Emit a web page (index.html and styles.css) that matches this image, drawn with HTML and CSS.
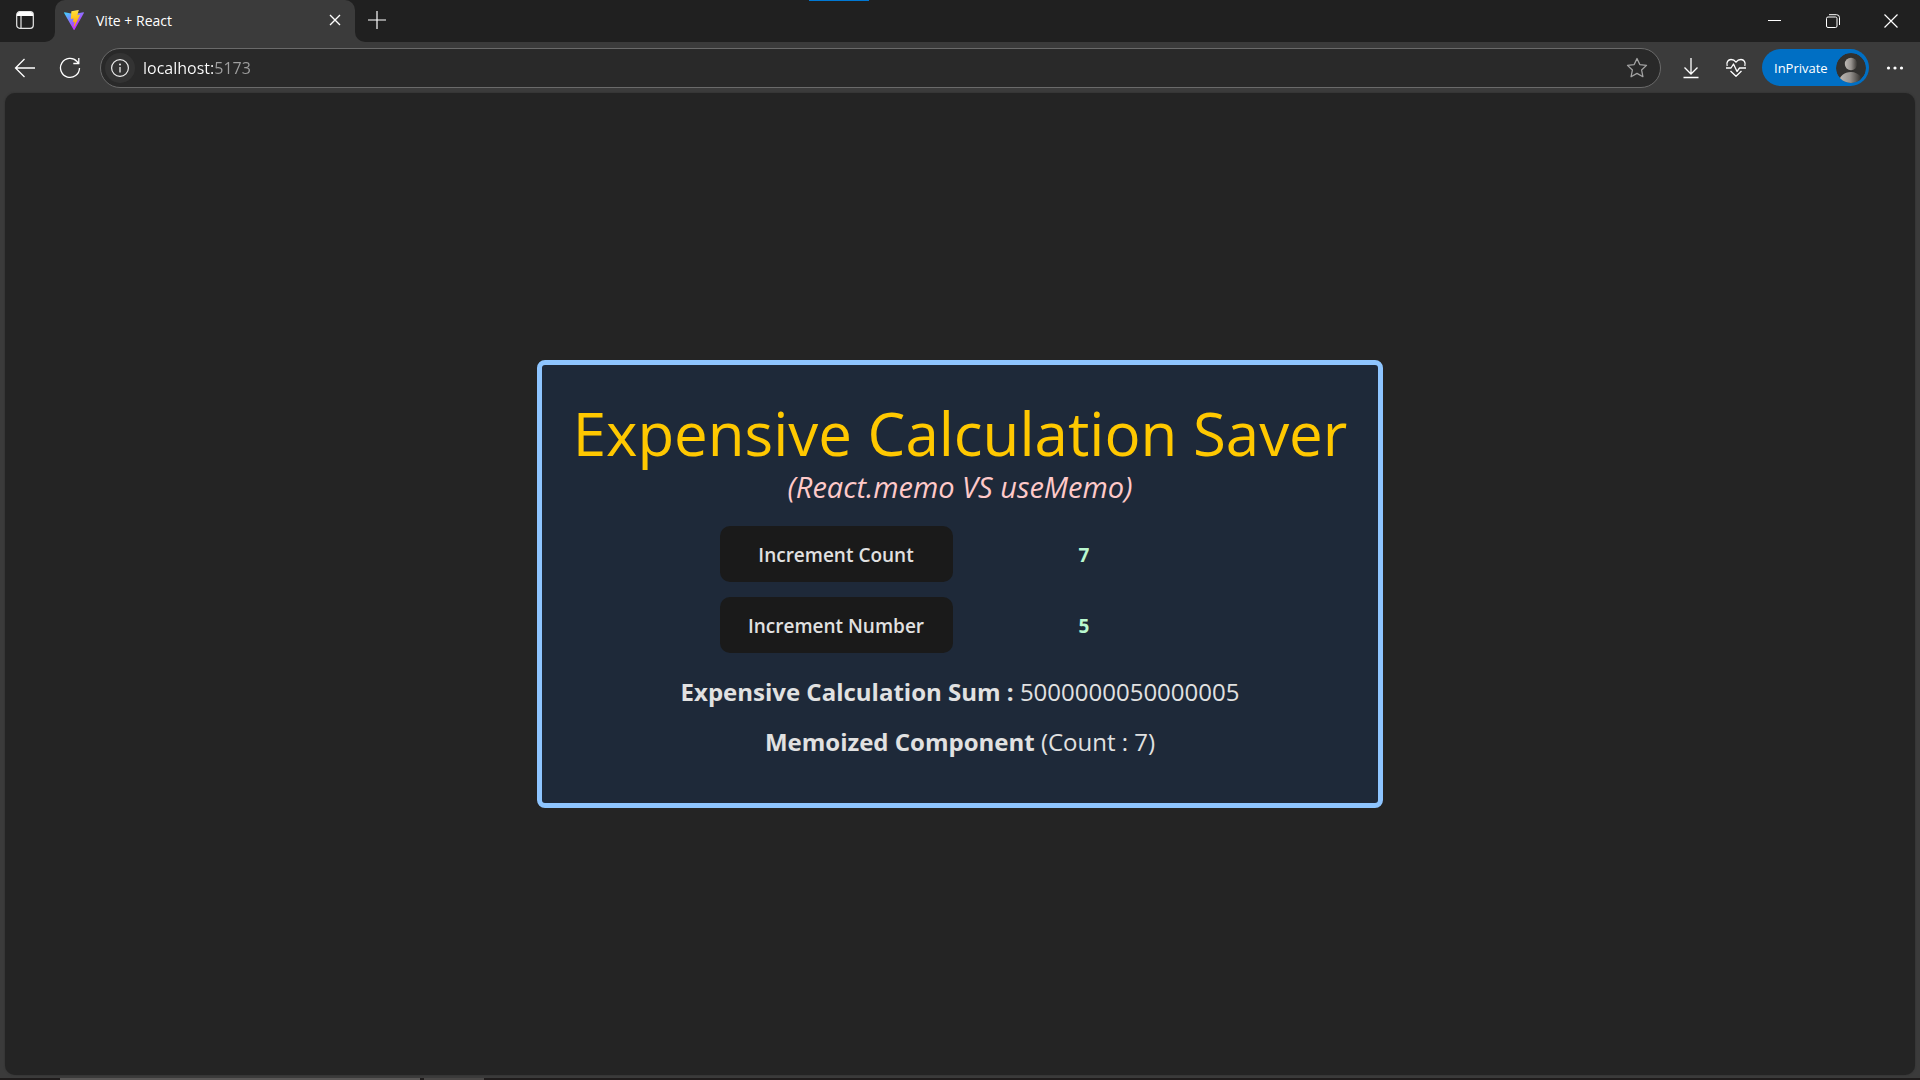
FILE: index.html
```html
<!DOCTYPE html>
<html lang="en">
<head>
<meta charset="utf-8">
<meta name="viewport" content="width=device-width, initial-scale=1">
<title>Vite + React</title>
<link rel="stylesheet" href="styles.css">
</head>
<body>
<div class="browser">
  <header class="tab-strip">
    <div class="strip-start">
      <button class="icon-button" aria-label="Tab actions">
        <svg width="20" height="20" viewBox="0 0 20 20"><rect x="1.7" y="1.7" width="16.6" height="16.6" rx="3" fill="none" stroke="#e6e6e6" stroke-width="1.2"/><path d="M2 6V4.5A2.5 2.5 0 0 1 4.500 2h11A2.500 2.500 0 0 1 18 4.500V6z" fill="#fff"/><path d="M6 6v12" stroke="#e6e6e6" stroke-width="1.2"/></svg>
      </button>
    </div>
    <div class="tab-slot">
      <div class="tab">
        <svg class="favicon" width="20" height="20" viewBox="0 0 256 257" aria-hidden="true">
          <defs>
            <linearGradient id="shield" x1="-.8%" x2="57.6%" y1="7.700%" y2="78.400%"><stop offset="0" stop-color="#41D1FF"/><stop offset="1" stop-color="#BD34FE"/></linearGradient>
            <linearGradient id="bolt" x1="43.400%" x2="50.300%" y1="2.200%" y2="89%"><stop offset="0" stop-color="#FFEA83"/><stop offset=".083" stop-color="#FFDD35"/><stop offset="1" stop-color="#FFA800"/></linearGradient>
          </defs>
          <path fill="url(#shield)" d="M255.153 37.938L134.897 252.976c-2.483 4.440-8.862 4.466-11.382.048L.875 37.958c-2.746-4.814 1.371-10.646 6.827-9.670l120.385 21.517a6.537 6.537 0 0 0 2.322-.004l117.867-21.483c5.438-.991 9.574 4.796 6.877 9.620z"/>
          <path fill="url(#bolt)" d="M185.432.063L96.440 17.501a3.268 3.268 0 0 0-2.634 3.014l-5.474 92.456a3.268 3.268 0 0 0 3.997 3.378l24.777-5.718c2.318-.535 4.413 1.507 3.936 3.838l-7.361 36.047c-.495 2.426 1.782 4.500 4.151 3.780l15.304-4.649c2.372-.720 4.652 1.360 4.150 3.788l-11.698 56.621c-.732 3.542 3.979 5.473 5.943 2.437l1.313-2.028 72.516-144.720c1.215-2.423-.880-5.186-3.540-4.672l-25.505 4.922c-2.396.462-4.435-1.770-3.759-4.114l16.646-57.705c.677-2.350-1.370-4.583-3.769-4.113z"/>
        </svg>
        <span class="tab-title">Vite + React</span>
        <button class="tab-close" aria-label="Close tab">
          <svg width="12" height="12" viewBox="0 0 12 12"><path d="M1 1l10 10M11 1L1 11" stroke="#fff" stroke-width="1.400"/></svg>
        </button>
      </div>
    </div>
    <div class="strip-end">
      <button class="new-tab" aria-label="New tab">
        <svg width="18" height="18" viewBox="0 0 18 18"><path d="M9 0v18M0 9h18" stroke="#fff" stroke-width="1.200"/></svg>
      </button>
      <div class="window-controls">
        <button class="window-button" aria-label="Minimize"><svg width="14" height="14" viewBox="0 0 14 14"><path d="M0 6.500h13" stroke="#fff"/></svg></button>
        <button class="window-button" aria-label="Restore"><svg width="14" height="14" viewBox="0 0 14 14"><rect x=".5" y="3" width="10.500" height="10.500" rx="1.500" fill="none" stroke="#fff"/><path d="M3 .700h7.500a3 3 0 0 1 3 3V11" fill="none" stroke="#fff"/></svg></button>
        <button class="window-button" aria-label="Close"><svg width="14" height="14" viewBox="0 0 14 14"><path d="M.5 .500l13 13M13.500 .500l-13 13" stroke="#fff" stroke-width="1.200"/></svg></button>
      </div>
      <span class="share-marker"></span>
    </div>
  </header>

  <div class="toolbar">
    <button class="icon-button" aria-label="Back">
      <svg width="22" height="22" viewBox="0 0 22 22"><path d="M21 11H1.500M10.500 2L1.500 11l9 9" fill="none" stroke="#fff" stroke-width="1.300"/></svg>
    </button>
    <button class="icon-button" aria-label="Refresh">
      <svg width="22" height="22" viewBox="0 0 22 22"><path d="M20.500 11A9.500 9.500 0 1 1 18 4.500l1.500 1.800M19.800 1v5.500h-5.500" fill="none" stroke="#fff" stroke-width="1.300"/></svg>
    </button>
    <div class="address-bar">
      <button class="site-info" aria-label="View site information">
        <svg width="20" height="20" viewBox="0 0 20 20"><circle cx="10" cy="10" r="8.400" fill="none" stroke="#eee" stroke-width="1.200"/><path d="M10 9v5.500" stroke="#eee" stroke-width="1.300"/><circle cx="10" cy="6.500" r="1" fill="#eee"/></svg>
      </button>
      <input class="address" type="text" aria-label="Address" value="localhost:5173">
      <button class="favorite" aria-label="Add to favorites">
        <svg width="22" height="22" viewBox="0 0 22 22"><path d="M11 1.500l2.800 6.100 6.700.8-4.900 4.600 1.300 6.700L11 16.400l-5.900 3.300 1.300-6.700L1.500 8.400l6.700-.8z" fill="none" stroke="#a3a3a3" stroke-width="1.300" stroke-linejoin="round"/></svg>
      </button>
    </div>
    <button class="icon-button" aria-label="Downloads">
      <svg width="20" height="22" viewBox="0 0 20 22"><path d="M10 1v15.500M3.500 10.500l6.500 6.500 6.500-6.500M2.500 20.500h15" fill="none" stroke="#fff" stroke-width="1.300"/></svg>
    </button>
    <button class="icon-button" aria-label="Browser essentials">
      <svg width="22" height="22" viewBox="0 0 22 22"><path d="M2.200 9C.900 5.500 3.200 2.500 6 2.500c2.200 0 3.800 1 5 2.700 1.200-1.700 2.800-2.700 5-2.700 2.800 0 5.100 3 3.800 6.500M1 11h5l2.500-4 3.500 7.500 2.500-3.500H21M5.500 14l5.500 5.300 5.500-5.300" fill="none" stroke="#fff" stroke-width="1.300" stroke-linejoin="round"/></svg>
    </button>
    <button class="profile">
      InPrivate
      <svg width="30" height="30" viewBox="0 0 30 30" aria-hidden="true">
        <defs><linearGradient id="person" x1="0" x2="1"><stop offset="0" stop-color="#bdb8b3"/><stop offset=".5" stop-color="#989490"/><stop offset="1" stop-color="#34322f"/></linearGradient><clipPath id="disc"><circle cx="15" cy="15" r="15"/></clipPath></defs>
        <g clip-path="url(#disc)"><circle cx="15" cy="15" r="15" fill="#32312f"/><circle cx="15" cy="11" r="6.200" fill="url(#person)"/><path d="M3 30c0-7 5-11 12-11 4 0 8 2 10 5v6z" fill="url(#person)"/></g>
      </svg>
    </button>
    <button class="icon-button" aria-label="Settings and more">
      <svg width="18" height="18" viewBox="0 0 18 18" fill="#fff"><circle cx="2.500" cy="9" r="1.600"/><circle cx="9" cy="9" r="1.600"/><circle cx="15.500" cy="9" r="1.600"/></svg>
    </button>
  </div>

  <main class="viewport">
    <section class="card">
      <h1 class="title">Expensive Calculation Saver</h1>
      <p class="subtitle">(React.memo VS useMemo)</p>
      <div class="counters">
        <button class="counter-button">Increment Count</button>
        <output class="counter-value">7</output>
        <button class="counter-button">Increment Number</button>
        <output class="counter-value">5</output>
      </div>
      <p class="result"><strong>Expensive Calculation Sum :</strong> 5000000050000005</p>
      <p class="result"><strong>Memoized Component</strong> (Count : 7)</p>
    </section>
  </main>

  <footer class="taskbar">
    <span class="task-window"></span>
    <span class="task-item"></span>
  </footer>
</div>
</body>
</html>
```
FILE: styles.css
```css
* {
  box-sizing: border-box;
}

body {
  margin: 0;
  font-family: "Open Sans", "Noto Sans", sans-serif;
  color: #fff;
  background: #3b3b3b;
}

button,
input {
  margin: 0;
  padding: 0;
  border: 0;
  background: none;
  color: inherit;
  font: inherit;
}

svg {
  display: block;
}

.browser {
  display: flex;
  flex-direction: column;
  min-height: 100vh;
}

/* Tab strip */

.tab-strip {
  display: flex;
  height: 42px;
}

.strip-start {
  display: flex;
  width: 55px;
  padding-left: 2px;
  background: #202020;
  border-bottom-right-radius: 10px;
}

.tab-slot {
  width: 300px;
  background: linear-gradient(#202020 50%, #3b3b3b 50%);
}

.tab {
  display: flex;
  align-items: center;
  height: 42px;
  padding: 0 8px 2px 9px;
  background: #3b3b3b;
  border-radius: 10px 10px 0 0;
}

.tab-title {
  flex: 1;
  padding-left: 12px;
  font-size: 14px;
}

.tab-close {
  display: grid;
  place-items: center;
  width: 24px;
  height: 24px;
}

.strip-end {
  position: relative;
  display: flex;
  flex: 1;
  justify-content: space-between;
  background: #202020;
  border-bottom-left-radius: 10px;
}

.new-tab {
  display: grid;
  place-items: center;
  width: 44px;
  height: 39px;
}

.window-controls {
  display: flex;
}

.window-button {
  display: grid;
  place-items: center;
  width: 58px;
}

.share-marker {
  position: absolute;
  top: 0;
  left: 454px;
  width: 60px;
  height: 1px;
  background: #0078d4;
}

/* Toolbar */

.icon-button {
  display: grid;
  place-items: center;
  width: 45px;
  height: 40px;
}

.toolbar {
  display: flex;
  align-items: center;
  height: 51px;
  padding: 0 3px 0 2px;
}

.address-bar {
  display: flex;
  flex: 1;
  align-items: center;
  height: 40px;
  margin: 0 7px 0 8px;
  padding: 0 12px 0 4px;
  background: #292929;
  border: 1px solid #6a6a6a;
  border-radius: 20px;
}

.site-info {
  display: grid;
  place-items: center;
  width: 30px;
  height: 30px;
  border-radius: 15px;
  background: #333;
}

.address {
  flex: 1;
  min-width: 0;
  height: 36px;
  padding-left: 8px;
  font-size: 16px;
  color: transparent;
  background: linear-gradient(to right, #fff 79px, #a0a0a0 79px);
  background-clip: text;
}

.profile {
  display: flex;
  align-items: center;
  justify-content: space-between;
  width: 107px;
  height: 37px;
  margin: 0 3px 0 4px;
  padding: 0 3px 0 12px;
  border-radius: 19px;
  background: #006fc4;
  font-size: 13px;
}

/* Page */

.viewport {
  display: flex;
  flex: 1;
  align-items: center;
  justify-content: center;
  margin: 0 5px 3px;
  border-radius: 10px;
  background: #242424;
  box-shadow: 0 0 2px #2c2c2c;
}

.card {
  display: flex;
  flex-direction: column;
  align-items: center;
  width: 846px;
  max-width: 100%;
  padding: 32px 16px 36px;
  border: 5px solid #8ec5ff;
  border-radius: 8px;
  background: #1e2939;
  color: #e1e1e1;
  text-align: center;
}

.title {
  margin: 0;
  font-size: 60px;
  font-weight: 400;
  line-height: 72px;
  color: #ffc800;
}

.subtitle {
  margin: 0;
  font-size: 29px;
  font-style: italic;
  line-height: 36px;
  color: #ffc9c9;
}

.counters {
  display: grid;
  grid-template-columns: 1fr 1fr;
  gap: 15px;
  align-items: center;
  width: 481px;
  max-width: 100%;
  margin: 21px 0 14px;
}

.counter-button {
  height: 56px;
  padding-top: 1px;
  border-radius: 10px;
  background: #1a1a1a;
  font-size: 19px;
  font-weight: 600;
}

.counter-value {
  padding-top: 1px;
  font-size: 19px;
  font-weight: 700;
  color: #b9f8cf;
}

.result {
  margin: 0;
  font-size: 24px;
  line-height: 50px;
}

/* Visible edge of the system taskbar */

.taskbar {
  display: flex;
  gap: 4px;
  height: 2px;
  padding-left: 60px;
  background: #1f1c1c;
}

.task-window {
  width: 360px;
  background: #5a5857;
}

.task-item {
  width: 60px;
  background: #4a4847;
}
```
